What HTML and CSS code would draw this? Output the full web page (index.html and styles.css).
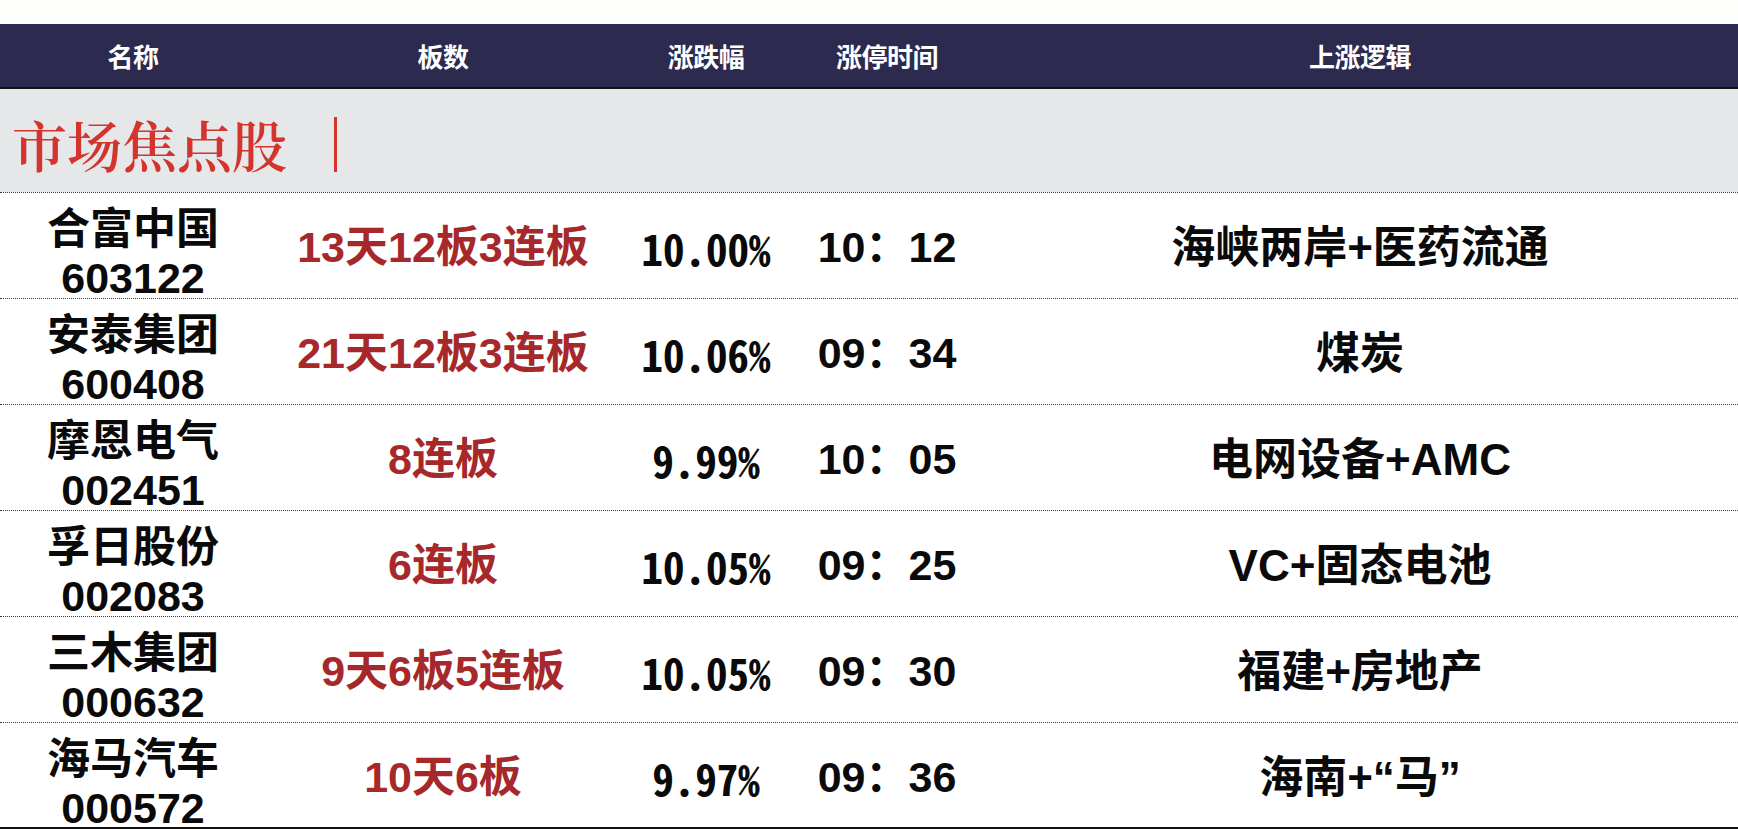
FILE: index.html
```html
<!DOCTYPE html>
<html lang="zh-CN">
<head>
<meta charset="utf-8">
<title>市场焦点股</title>
<link rel="stylesheet" href="styles.css">
</head>
<body>
<div class="page">
  <div class="top-strip"></div>
  <div class="table">
    <div class="thead">
      <div class="th">名称</div>
      <div class="th">板数</div>
      <div class="th">涨跌幅</div>
      <div class="th">涨停时间</div>
      <div class="th">上涨逻辑</div>
    </div>
    <div class="section">
      <span class="section-title">市场焦点股</span>
      <span class="section-bar"></span>
    </div>
    <div class="row">
      <div class="cell name"><span class="nm">合富中国</span><span class="code">603122</span></div>
      <div class="cell board">13天12板3连板</div>
      <div class="cell pct">10.00%</div>
      <div class="cell time">10：12</div>
      <div class="cell logic">海峡两岸+医药流通</div>
    </div>
    <div class="row">
      <div class="cell name"><span class="nm">安泰集团</span><span class="code">600408</span></div>
      <div class="cell board">21天12板3连板</div>
      <div class="cell pct">10.06%</div>
      <div class="cell time">09：34</div>
      <div class="cell logic">煤炭</div>
    </div>
    <div class="row">
      <div class="cell name"><span class="nm">摩恩电气</span><span class="code">002451</span></div>
      <div class="cell board">8连板</div>
      <div class="cell pct">9.99%</div>
      <div class="cell time">10：05</div>
      <div class="cell logic">电网设备+AMC</div>
    </div>
    <div class="row">
      <div class="cell name"><span class="nm">孚日股份</span><span class="code">002083</span></div>
      <div class="cell board">6连板</div>
      <div class="cell pct">10.05%</div>
      <div class="cell time">09：25</div>
      <div class="cell logic">VC+固态电池</div>
    </div>
    <div class="row">
      <div class="cell name"><span class="nm">三木集团</span><span class="code">000632</span></div>
      <div class="cell board">9天6板5连板</div>
      <div class="cell pct">10.05%</div>
      <div class="cell time">09：30</div>
      <div class="cell logic">福建+房地产</div>
    </div>
    <div class="row last">
      <div class="cell name"><span class="nm">海马汽车</span><span class="code">000572</span></div>
      <div class="cell board">10天6板</div>
      <div class="cell pct">9.97%</div>
      <div class="cell time">09：36</div>
      <div class="cell logic">海南+“马”</div>
    </div>
  </div>
</div>
</body>
</html>
```

FILE: styles.css
```css
html, body {
  margin: 0;
  padding: 0;
  background: #ffffff;
}

.page {
  width: 1738px;
  font-family: "Noto Sans CJK SC", "Liberation Sans", sans-serif;
  color: #0a0a0a;
}

.top-strip {
  height: 24px;
  background: #fdfdfb;
}

.table {
  display: flex;
  flex-direction: column;
}

.thead,
.row {
  display: grid;
  grid-template-columns: 266px 354px 172px 190px 1fr;
}

.thead {
  height: 63px;
  background: #2c2a4f;
  border-bottom: 2px solid #111111;
  align-items: center;
}

.th {
  text-align: center;
  color: #ffffff;
  font-size: 26px;
  font-weight: 700;
  letter-spacing: -0.5px;
  line-height: 1;
  padding-top: 1px;
}

.section {
  height: 103px;
  background: #e6e7e8;
  display: flex;
  align-items: center;
  padding-left: 12px;
  gap: 47px;
}

.section-title {
  font-family: "Noto Serif CJK SC", "Noto Sans CJK SC", serif;
  font-size: 55px;
  line-height: 1;
  color: #d3352e;
  font-weight: 600;
  padding-top: 6px;
}

.section-bar {
  width: 3px;
  height: 55px;
  background: #d3352e;
  margin-top: 7px;
}

.row {
  height: 105px;
  border-top: 1px dotted #3a3a3a;
  align-items: center;
}

.row.last {
  height: 104px;
  border-bottom: 2px solid #111111;
}

.cell {
  text-align: center;
  font-family: "Liberation Sans", "Noto Sans CJK SC", sans-serif;
  font-size: 44px;
  font-weight: 700;
  line-height: 1;
  white-space: nowrap;
}

.name {
  display: flex;
  flex-direction: column;
  align-items: center;
  margin-top: 3px;
}

.nm,
.code {
  display: block;
}

.nm {
  font-family: "Noto Sans CJK SC", sans-serif;
  font-size: 43px;
  line-height: 58px;
}

.code {
  font-size: 43px;
  line-height: 48px;
}

.board {
  color: #a6282a;
  font-size: 43px;
}

.pct {
  font-family: "Noto Sans CJK SC", sans-serif;
  font-feature-settings: "hwid" 1;
  font-size: 43px;
}

.time {
  font-size: 43px;
}

.logic {
  font-size: 44px;
}
```
